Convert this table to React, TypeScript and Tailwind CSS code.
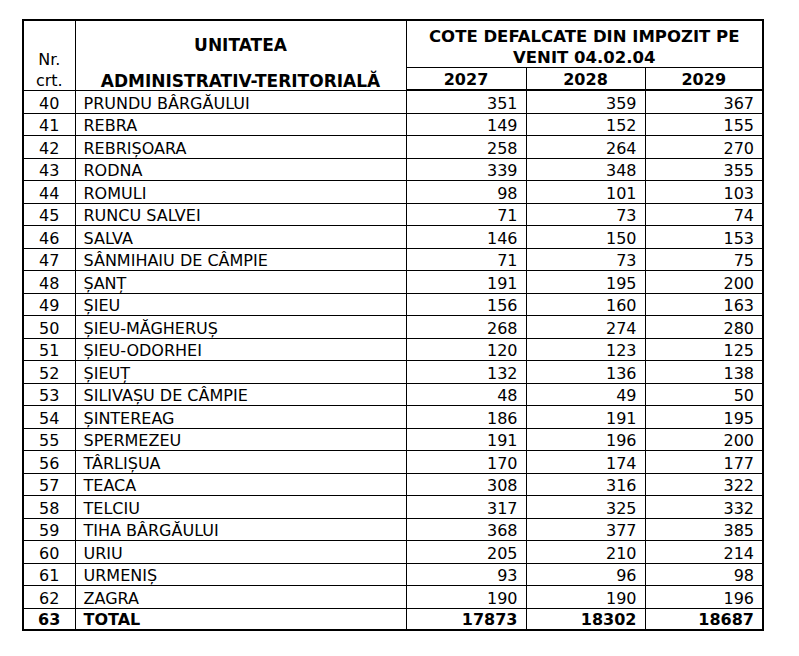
import React from 'react';

// Cote defalcate din impozit pe venit — tabel unități administrativ-teritoriale

interface Row {
  nr: number;
  name: string;
  values: [number, number, number];
}

const rows: Row[] = [
  { nr: 40, name: 'PRUNDU BÂRGĂULUI', values: [351, 359, 367] },
  { nr: 41, name: 'REBRA', values: [149, 152, 155] },
  { nr: 42, name: 'REBRIȘOARA', values: [258, 264, 270] },
  { nr: 43, name: 'RODNA', values: [339, 348, 355] },
  { nr: 44, name: 'ROMULI', values: [98, 101, 103] },
  { nr: 45, name: 'RUNCU SALVEI', values: [71, 73, 74] },
  { nr: 46, name: 'SALVA', values: [146, 150, 153] },
  { nr: 47, name: 'SÂNMIHAIU DE CÂMPIE', values: [71, 73, 75] },
  { nr: 48, name: 'ȘANȚ', values: [191, 195, 200] },
  { nr: 49, name: 'ȘIEU', values: [156, 160, 163] },
  { nr: 50, name: 'ȘIEU-MĂGHERUȘ', values: [268, 274, 280] },
  { nr: 51, name: 'ȘIEU-ODORHEI', values: [120, 123, 125] },
  { nr: 52, name: 'ȘIEUȚ', values: [132, 136, 138] },
  { nr: 53, name: 'SILIVAȘU DE CÂMPIE', values: [48, 49, 50] },
  { nr: 54, name: 'ȘINTEREAG', values: [186, 191, 195] },
  { nr: 55, name: 'SPERMEZEU', values: [191, 196, 200] },
  { nr: 56, name: 'TÂRLIȘUA', values: [170, 174, 177] },
  { nr: 57, name: 'TEACA', values: [308, 316, 322] },
  { nr: 58, name: 'TELCIU', values: [317, 325, 332] },
  { nr: 59, name: 'TIHA BÂRGĂULUI', values: [368, 377, 385] },
  { nr: 60, name: 'URIU', values: [205, 210, 214] },
  { nr: 61, name: 'URMENIȘ', values: [93, 96, 98] },
  { nr: 62, name: 'ZAGRA', values: [190, 190, 196] },
];

const total: Row = { nr: 63, name: 'TOTAL', values: [17873, 18302, 18687] };

const years = ['2027', '2028', '2029'];

function DataRow({ row, index, bold }: { row: Row; index: number; bold?: boolean }) {
  const h = index % 2 === 0 ? 'h-[23px]' : 'h-[22px]';
  const weight = bold ? 'font-bold' : 'font-normal';
  return (
    <tr className={h}>
      <td className={`border border-black text-center align-bottom pt-0 pb-[1px] leading-[17px] ${weight}`}>
        {row.nr}
      </td>
      <td className={`border border-black text-left align-bottom pl-[8px] pt-0 pb-[1px] leading-[17px] ${weight}`}>
        {row.name}
      </td>
      {row.values.map((v, i) => (
        <td
          key={i}
          className={`border border-black text-right align-bottom pr-[8px] pt-0 pb-[1px] leading-[17px] ${weight}`}
        >
          {v}
        </td>
      ))}
    </tr>
  );
}

export default function App() {
  return (
    <div className="min-h-[656px] w-[799px] bg-white pt-[19px] pl-[22px] text-black font-['DejaVu_Sans',sans-serif] text-[16px]">
      <table className="table-fixed border-collapse border-2 border-black w-[740px]">
        <colgroup>
          <col className="w-[52px]" />
          <col className="w-[331px]" />
          <col className="w-[120px]" />
          <col className="w-[119px]" />
          <col className="w-[118px]" />
        </colgroup>
        <thead>
          <tr className="h-[47px]">
            <td rowSpan={2} className="border border-black p-0 align-top text-center">
              {/* fixed box so the text never stretches the header rows */}
              <div className="h-[64px] pt-[28px] flex flex-col items-center leading-[21px]">
                <span>Nr.</span>
                <span>crt.</span>
              </div>
            </td>
            <td rowSpan={2} className="border border-black p-0 align-top text-center font-bold text-[17px]">
              <div className="h-[64px] pt-[15px] flex flex-col items-center leading-[18px] gap-[18px]">
                <span>UNITATEA</span>
                <span>ADMINISTRATIV-TERITORIALĂ</span>
              </div>
            </td>
            <td colSpan={3} className="border border-black p-0 align-top text-center font-bold text-[16.5px]">
              <div className="h-[42px] pt-[5px] leading-[21px]">
                COTE DEFALCATE DIN IMPOZIT PE
                <br />
                VENIT 04.02.04
              </div>
            </td>
          </tr>
          <tr className="h-[23px]">
            {years.map((y) => (
              <td key={y} className="border border-black border-b-2 p-0 pt-[3px] align-top text-center font-bold leading-[18px]">
                {y}
              </td>
            ))}
          </tr>
        </thead>
        <tbody>
          {rows.map((row, i) => (
            <DataRow key={row.nr} row={row} index={i} />
          ))}
          <DataRow row={total} index={rows.length} bold />
        </tbody>
      </table>
    </div>
  );
}
